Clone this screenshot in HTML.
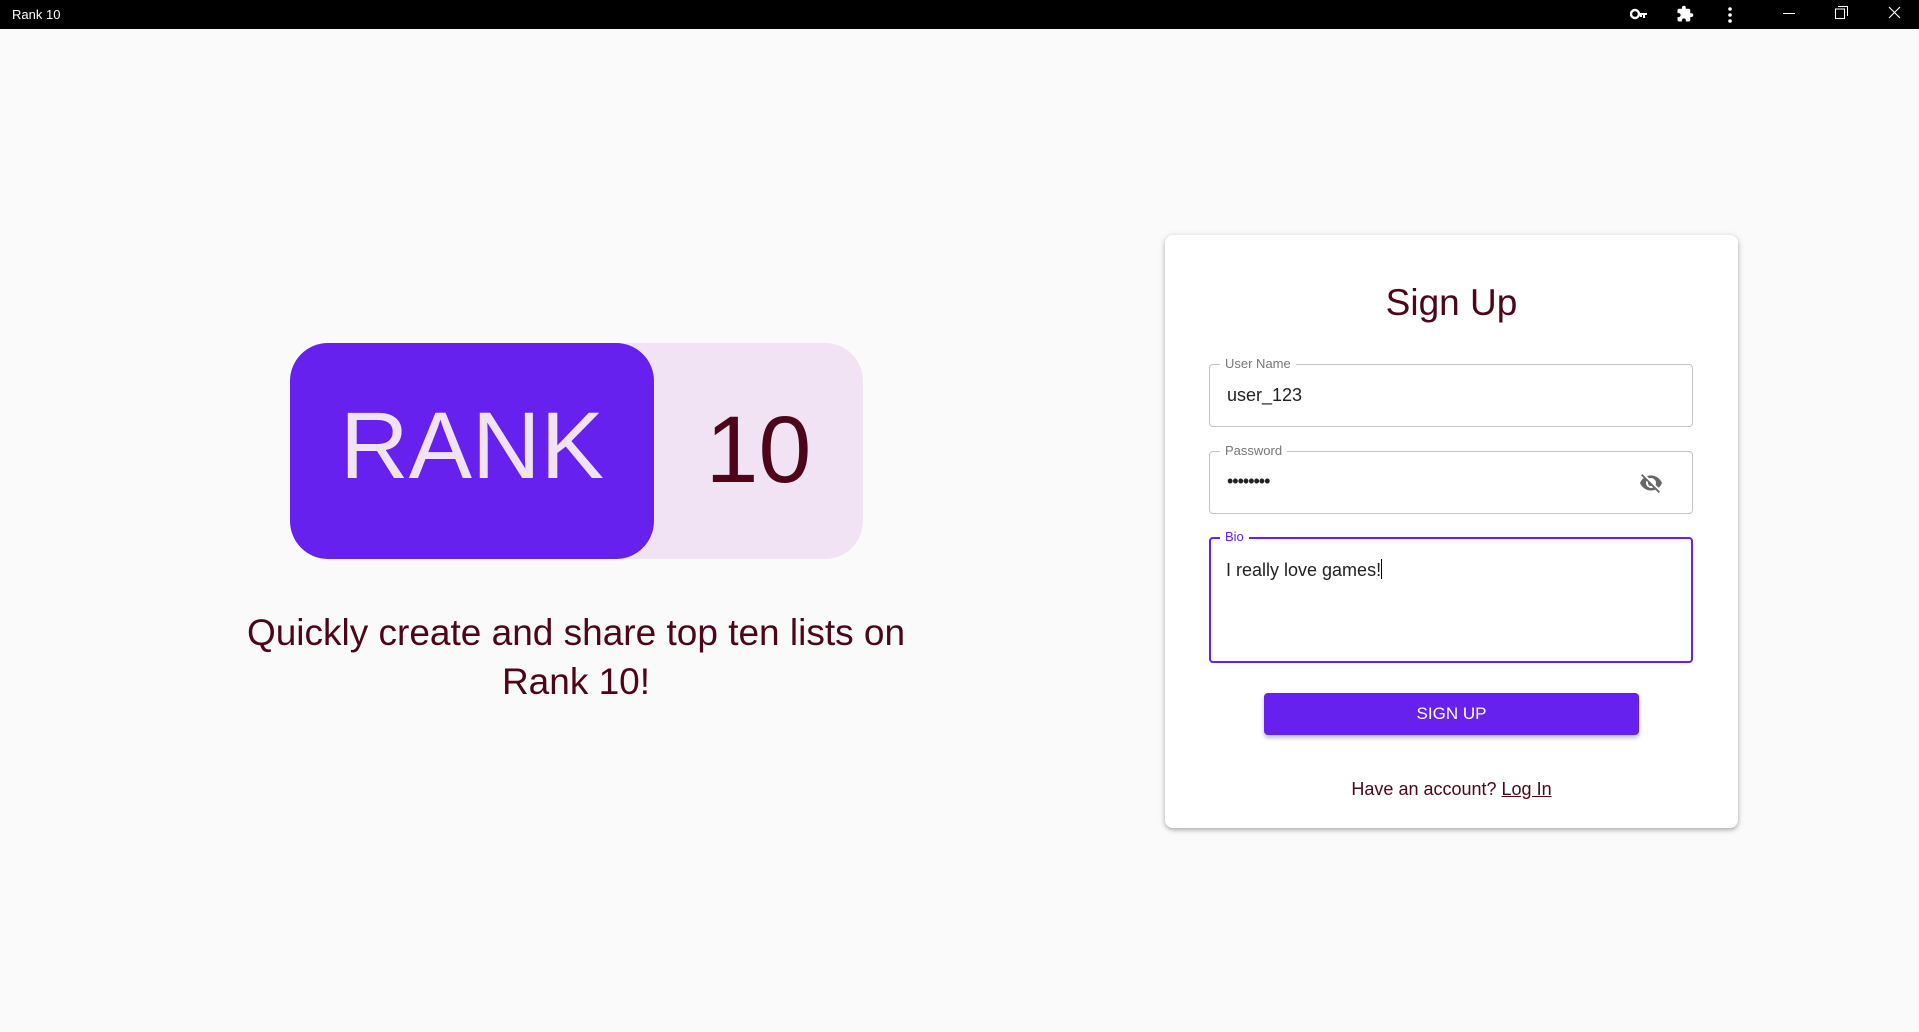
<!DOCTYPE html>
<html><head><meta charset="utf-8"><style>
*{margin:0;padding:0;box-sizing:border-box}
body{width:1919px;height:1032px;background:#fafafa;font-family:"Liberation Sans",sans-serif;position:relative;overflow:hidden}
.tb{position:absolute;left:0;top:0;width:1919px;height:29px;background:#000;color:#fff;font-size:13px}
.tb .t{position:absolute;left:12px;top:7px}
.abs{position:absolute}
.card{position:absolute;left:1165px;top:235px;width:573px;height:593px;background:#fff;border-radius:8px;box-shadow:0 2px 4px rgba(0,0,0,.25),0 1px 8px rgba(0,0,0,.1)}
.fld{position:absolute;left:1209px;width:484px;border:1px solid #c4c4c4;border-radius:4px}
.lbl{position:absolute;left:10px;top:-9px;background:#fff;padding:0 5px;font-size:13px;color:#777}
.val{position:absolute;left:17px;font-size:18px;color:#222}
</style></head><body>
<div class="tb"><span class="t">Rank 10</span>
<svg class="abs" style="left:1630px;top:7px" width="18" height="14" viewBox="0 0 18 14"><circle cx="5" cy="7" r="4" fill="none" stroke="#fff" stroke-width="2.4"/><path d="M8 6h9v2h-2v3h-2V8h-1v2h-2V8H8z" fill="#fff"/></svg>
<svg class="abs" style="left:1676px;top:5px" width="18" height="18" viewBox="0 0 24 24"><path fill="#fff" d="M20.5 11H19V7c0-1.1-.9-2-2-2h-4V3.5a2.5 2.5 0 0 0-5 0V5H4c-1.1 0-2 .9-2 2v3.8h1.5c1.5 0 2.7 1.2 2.7 2.7S5 16.2 3.5 16.2H2V20c0 1.1.9 2 2 2h3.8v-1.500c0-1.5 1.2-2.7 2.7-2.7s2.7 1.2 2.7 2.7V22H17c1.1 0 2-.9 2-2v-4h1.5a2.5 2.5 0 0 0 0-5z"/></svg>
<svg class="abs" style="left:1727px;top:6px" width="6" height="18"><circle cx="3" cy="3" r="1.8" fill="#fff"/><circle cx="3" cy="9" r="1.8" fill="#fff"/><circle cx="3" cy="15" r="1.8" fill="#fff"/></svg>
<div class="abs" style="left:1783px;top:13px;width:12px;height:1px;background:#fff"></div>
<svg class="abs" style="left:1835px;top:6px" width="13" height="13"><path d="M3 .5h9.5V10M.5 3h9v9.5H.5z" fill="none" stroke="#fff"/></svg>
<svg class="abs" style="left:1888px;top:6px" width="13" height="13"><path d="M1 1l11 11M12 1L1 12" stroke="#fff" stroke-width="1.1"/></svg>
</div>

<div class="abs" style="left:290px;top:343px;width:573px;height:216px;background:#f1e3f4;border-radius:38px"></div>
<div class="abs" style="left:290px;top:343px;width:364px;height:216px;background:#6621ef;border-radius:38px"></div>
<div class="abs" style="left:290px;top:399px;width:364px;text-align:center;font-size:95px;color:#f1e3f4;line-height:1">RANK</div>
<div class="abs" style="left:654px;top:403px;width:209px;text-align:center;font-size:95px;color:#4d0519;line-height:1">10</div>
<div class="abs" style="left:176px;top:608px;width:800px;text-align:center;font-size:37px;color:#4d0519;line-height:49px">Quickly create and share top ten lists on<br>Rank 10!</div>

<div class="card"></div>
<div class="abs" style="left:1165px;top:282px;width:573px;text-align:center;font-size:37px;color:#4d0519">Sign Up</div>
<div class="fld" style="top:364px;height:63px"><span class="lbl">User Name</span><span class="val" style="top:20px">user_123</span></div>
<div class="fld" style="top:451px;height:63px"><span class="lbl">Password</span><span class="val" style="top:19px;letter-spacing:-1px">••••••••</span>
<svg class="abs" style="left:429px;top:19px" width="24" height="24" viewBox="0 0 24 24"><path fill="#666" d="M12 7c2.76 0 5 2.240 5 5 0 .65-.13 1.26-.36 1.83l2.92 2.92c1.51-1.26 2.7-2.89 3.43-4.75-1.73-4.39-6-7.5-11-7.5-1.4 0-2.74.25-3.98.7l2.16 2.16C10.74 7.13 11.35 7 12 7zM2 4.27l2.28 2.28.46.46C3.08 8.3 1.78 10.02 1 12c1.73 4.39 6 7.5 11 7.5 1.55 0 3.03-.3 4.38-.84l.42.42L19.73 22 21 20.73 3.27 3 2 4.27zM7.53 9.8l1.55 1.55c-.05.21-.08.43-.08.65 0 1.66 1.34 3 3 3 .22 0 .44-.03.65-.08l1.55 1.55c-.67.33-1.41.53-2.2.53-2.76 0-5-2.24-5-5 0-.79.2-1.53.53-2.2z"/></svg></div>
<div class="fld" style="top:537px;height:126px;border:2px solid #6621ef"><span class="lbl" style="color:#6621ef;left:9px;top:-10px">Bio</span><span class="val" style="top:20px;left:15px">I really love games!<span style="display:inline-block;width:1px;height:20px;background:#000;vertical-align:-3px"></span></span></div>
<div class="abs" style="left:1264px;top:693px;width:375px;height:42px;background:#6621ef;border-radius:4px;box-shadow:0 3px 4px rgba(0,0,0,.25);color:#fff;font-size:17px;text-align:center;line-height:42px">SIGN UP</div>
<div class="abs" style="left:1165px;top:779px;width:573px;text-align:center;font-size:18px;color:#4d0519">Have an account? <u>Log In</u></div>
</body></html>
